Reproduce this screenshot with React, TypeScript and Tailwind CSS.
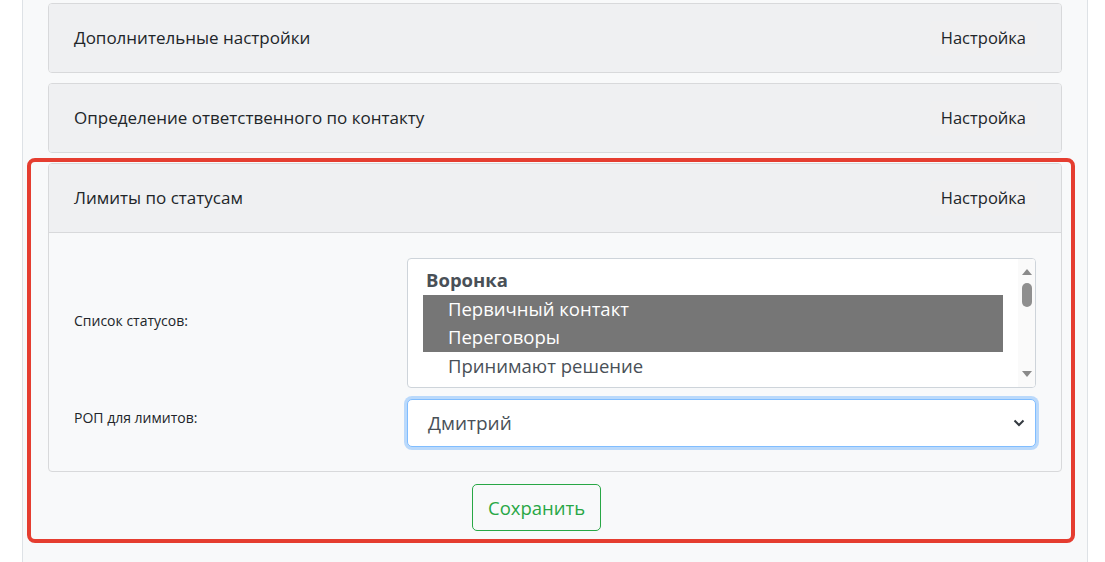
import React from "react";

const font = { fontFamily: '"Open Sans", "Noto Sans", sans-serif' };

function CardHeader({ title }: { title: string }) {
  return (
    <div className="flex items-center justify-between h-[68px] pl-[25px] pr-[24px] bg-[#eff0f2]">
      <span className="text-[17px] text-[#212529]">{title}</span>
      <button className="h-[35px] px-[11px] rounded-[3px] bg-[#f0f0f1] text-[16.5px] text-[#212529]">
        Настройка
      </button>
    </div>
  );
}

function Scrollbar() {
  return (
    <div className="w-[17px] bg-[#fafafa] flex flex-col items-center justify-between py-[9px]">
      <div className="flex flex-col items-center gap-[8px]">
        <svg width="10" height="7" viewBox="0 0 10 7">
          <path d="M0 7 L5 1 L10 7 Z" fill="#8a8a8a" />
        </svg>
        <div className="w-[10px] h-[24px] rounded-[5px] bg-[#8f8f8f]" />
      </div>
      <svg width="10" height="7" viewBox="0 0 10 7">
        <path d="M0 0 L10 0 L5 6 Z" fill="#8a8a8a" />
      </svg>
    </div>
  );
}

export default function App() {
  return (
    <div className="relative w-[1105px] h-[562px] bg-white overflow-hidden" style={font}>
      <div className="ml-[22px] w-[1066px] h-full bg-[#f8f9fa] border-x border-[#dee2e6] pl-[25px] pr-[25px] pt-[3px]">
        <div className="flex flex-col gap-[10px]">
          <div className="border border-[#d8d9db] rounded-[4px] overflow-hidden">
            <CardHeader title="Дополнительные настройки" />
          </div>
          <div className="border border-[#d8d9db] rounded-[4px] overflow-hidden">
            <CardHeader title="Определение ответственного по контакту" />
          </div>
          <div className="border border-[#d8d9db] rounded-[4px] overflow-hidden">
            <div className="border-b border-[#d8d9db]">
              <CardHeader title="Лимиты по статусам" />
            </div>
            <div className="px-[25px] pt-[25px] pb-[24px] flex flex-col gap-[11px]">
              <div className="flex items-center">
                <div className="w-[333px] text-[14px] text-[#212529] -mt-[6px]">Список статусов:</div>
                <div className="flex-1 h-[130px] bg-white border border-[#ced4da] rounded-[4px] flex overflow-hidden">
                  <div className="flex-1 pl-[15px] pr-[15px] pt-[7px] text-[18.5px] text-[#495057] leading-[28.5px]">
                    <div className="pl-[3px] font-bold">Воронка</div>
                    <div className="pl-[25px] bg-[#767676] text-white">Первичный контакт</div>
                    <div className="pl-[25px] bg-[#767676] text-white">Переговоры</div>
                    <div className="pl-[25px]">Принимают решение</div>
                  </div>
                  <Scrollbar />
                </div>
              </div>
              <div className="flex items-center">
                <div className="w-[333px] text-[14px] text-[#212529] -mt-[11px]">РОП для лимитов:</div>
                <div className="flex-1 h-[48px] bg-white border border-[#80bdff] rounded-[5px] shadow-[0_0_0_3px_rgba(0,123,255,0.25)] flex items-center justify-between pl-[20px] pr-[10px]">
                  <span className="text-[19px] text-[#495057]">Дмитрий</span>
                  <svg width="12" height="8" viewBox="0 0 12 8">
                    <path d="M1.5 1.5 L6 6 L10.5 1.5" stroke="#343a40" strokeWidth="2" fill="none" />
                  </svg>
                </div>
              </div>
            </div>
          </div>
        </div>
        <div className="flex mt-[12px] pl-[424px]">
          <button className="h-[47px] px-[15px] border border-[#28a745] rounded-[5px] text-[#28a745] text-[18.5px]">
            Сохранить
          </button>
        </div>
      </div>
      <div className="absolute left-[27px] top-[158px] w-[1048px] h-[385px] border-[4px] border-[#e53d30] rounded-[8px] pointer-events-none" />
    </div>
  );
}
